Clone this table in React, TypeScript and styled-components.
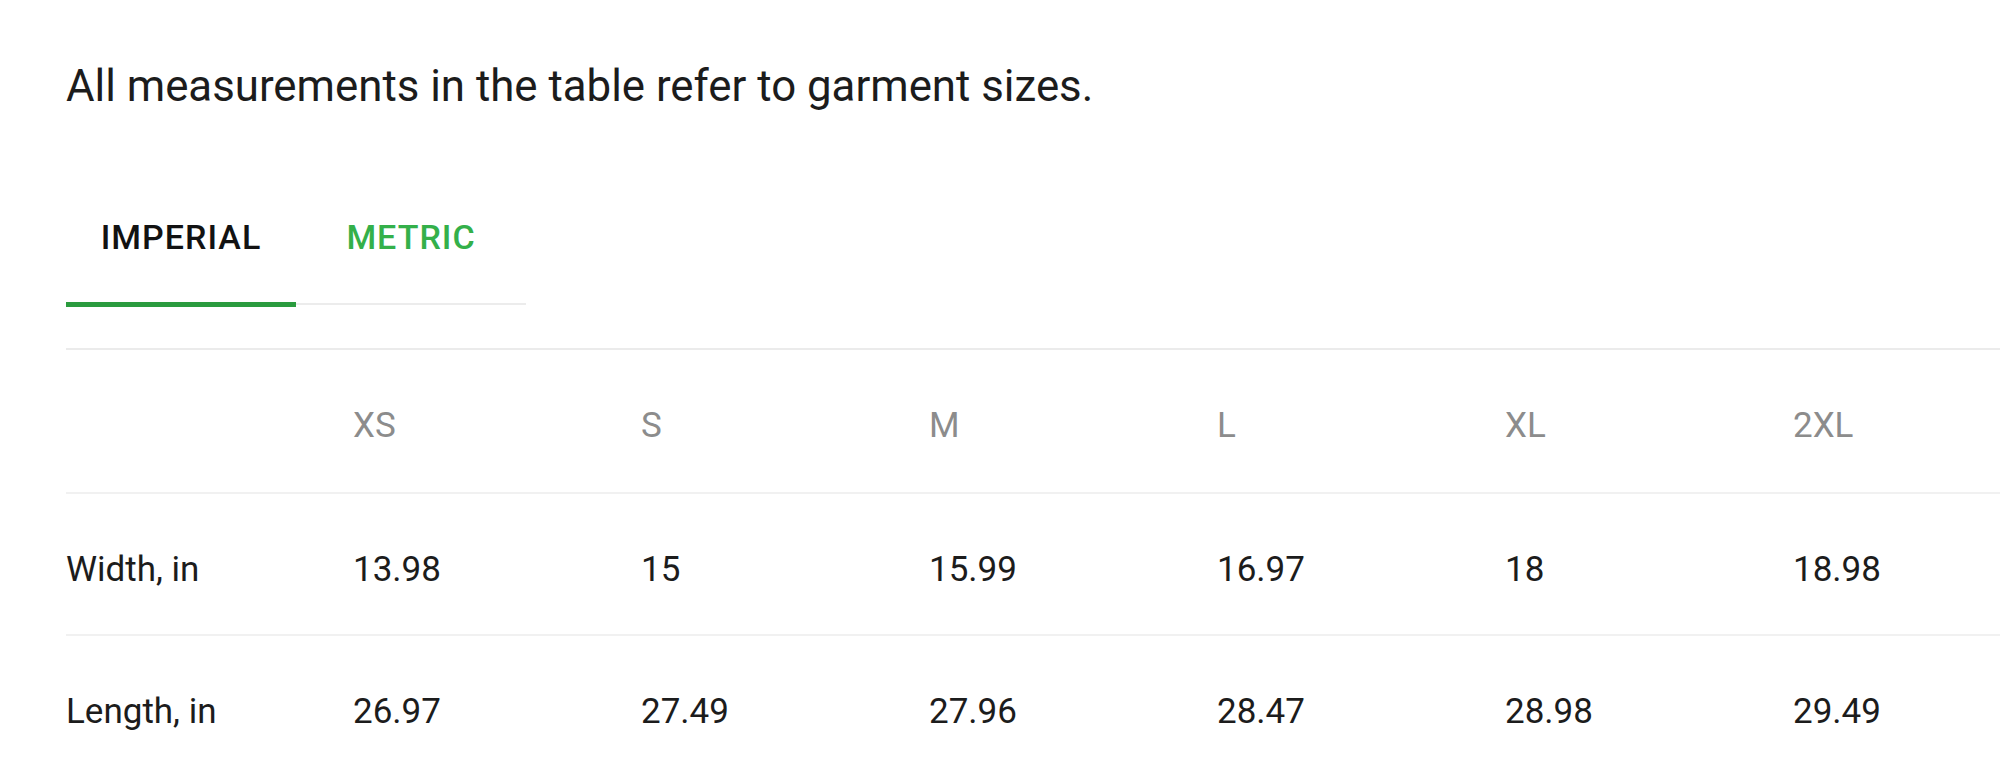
import React, { useState } from 'react';
import styled, { createGlobalStyle } from 'styled-components';

const GlobalStyle = createGlobalStyle`
  html, body {
    margin: 0;
    padding: 0;
    background: #ffffff;
    overflow: hidden;
  }
  body {
    font-family: Roboto, "Noto Sans", Arial, sans-serif;
    color: #1f1f1f;
  }
`;

const Page = styled.div`
  padding: 60px 0 0 66px;
  width: 2100px;
`;

const Intro = styled.p`
  margin: 0 0 81px 0;
  font-size: 43.8px;
  line-height: 52px;
  font-weight: 400;
  color: #1c1c1c;
`;

const TabList = styled.div`
  display: flex;
  width: 460px;
  border-bottom: 2px solid #ececec;
`;

const Tab = styled.button<{ $active: boolean }>`
  position: relative;
  width: 230px;
  padding: 24px 0 46px 0;
  border: none;
  background: none;
  font-family: Roboto, "Noto Sans", Arial, sans-serif;
  font-size: 34px;
  line-height: 40px;
  letter-spacing: 1px;
  font-weight: 500;
  text-transform: uppercase;
  color: ${(p) => (p.$active ? '#121212' : '#34b04a')};
  cursor: pointer;

  &::after {
    content: '';
    display: ${(p) => (p.$active ? 'block' : 'none')};
    position: absolute;
    left: 0;
    right: 0;
    bottom: -3.5px;
    height: 5px;
    background: #2a9b3e;
  }
`;

const Table = styled.table`
  margin-top: 43px;
  border-collapse: collapse;
  table-layout: fixed;
  width: 2015px;
  border-top: 2px solid #ebebeb;
`;

const Row = styled.tr`
  border-bottom: 2px solid #f1f1f1;

  tbody &:last-child {
    border-bottom: none;
  }
`;

const Cell = styled.td<{ $head?: boolean }>`
  padding: 56px 0 ${(p) => (p.$head ? '46px' : '44px')} 0;
  font-size: 35px;
  line-height: 40px;
  text-align: left;
  font-weight: 400;
  white-space: nowrap;
  color: ${(p) => (p.$head ? '#8c8c8c' : '#1c1c1c')};
`;

const sizes = ['XS', 'S', 'M', 'L', 'XL', '2XL'];

const data = {
  imperial: [
    { label: 'Width, in', values: ['13.98', '15', '15.99', '16.97', '18', '18.98'] },
    { label: 'Length, in', values: ['26.97', '27.49', '27.96', '28.47', '28.98', '29.49'] },
  ],
  metric: [
    { label: 'Width, cm', values: ['35.5', '38.1', '40.6', '43.1', '45.7', '48.2'] },
    { label: 'Length, cm', values: ['68.5', '69.8', '71', '72.3', '73.6', '74.9'] },
  ],
};

export default function App() {
  const [unit, setUnit] = useState<'imperial' | 'metric'>('imperial');

  return (
    <Page>
      <GlobalStyle />
      <Intro>All measurements in the table refer to garment sizes.</Intro>
      <TabList>
        <Tab $active={unit === 'imperial'} onClick={() => setUnit('imperial')}>Imperial</Tab>
        <Tab $active={unit === 'metric'} onClick={() => setUnit('metric')}>Metric</Tab>
      </TabList>
      <Table>
        <colgroup>
          <col style={{ width: 287 }} />
          {sizes.map((s) => (
            <col key={s} style={{ width: 288 }} />
          ))}
        </colgroup>
        <thead>
          <Row>
            <Cell $head />
            {sizes.map((s) => (
              <Cell $head key={s}>{s}</Cell>
            ))}
          </Row>
        </thead>
        <tbody>
          {data[unit].map((r) => (
            <Row key={r.label}>
              <Cell>{r.label}</Cell>
              {r.values.map((v, i) => (
                <Cell key={i}>{v}</Cell>
              ))}
            </Row>
          ))}
        </tbody>
      </Table>
    </Page>
  );
}
